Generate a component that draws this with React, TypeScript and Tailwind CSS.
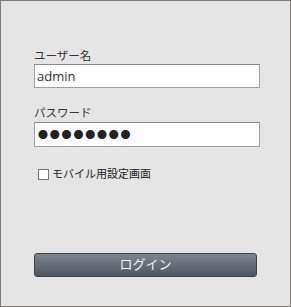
export default function App() {
  return (
    <div
      className="w-[291px] h-[307px] bg-[#e5e5e5] border border-[#7f7b79] text-[#222]"
      style={{ fontFamily: '"Open Sans", "Noto Sans CJK JP", sans-serif' }}
    >
      <div className="pl-[33px] pr-[30px] pt-[47px]">
        <div className="text-[11.5px] leading-[16px] text-[#333]">ユーザー名</div>
        <input
          defaultValue="admin"
          className="block w-[226px] h-[24px] bg-white border border-[#a0a0a0] border-t-[#8a8a8a] px-[2px] text-[13px] text-[#333] outline-none"
        />
        <div className="mt-[17px] text-[11.5px] leading-[16px] text-[#333]">パスワード</div>
        <div className="mt-[1px] w-[226px] h-[25px] bg-white border border-[#a0a0a0] border-t-[#8a8a8a] pl-[3px] flex items-center text-[#222]">
          <span className="text-[10px] leading-none tracking-[1.8px]">●●●●●●●●</span>
        </div>
        <label className="mt-[19px] ml-[4px] flex items-center gap-[3px] text-[11px] text-[#222]">
          <span className="w-[11px] h-[11px] bg-white border border-[#777]" />
          <span>モバイル用設定画面</span>
        </label>
        <button className="mt-[70px] block w-[223px] h-[24px] rounded-[3px] border border-[#3e444b] bg-gradient-to-b from-[#80868e] to-[#4e5762] text-[13px] text-[#f0f0f0]">
          ログイン
        </button>
      </div>
    </div>
  );
}
